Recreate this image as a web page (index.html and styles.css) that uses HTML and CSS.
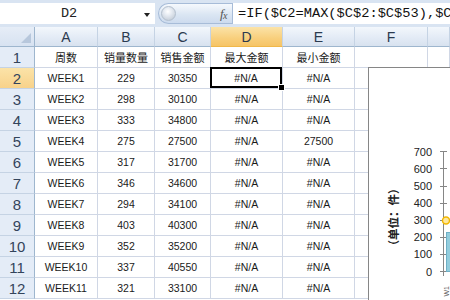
FILE: index.html
```html
<!DOCTYPE html>
<html>
<head>
<meta charset="utf-8">
<link rel="stylesheet" href="styles.css">
</head>
<body>
<div class="fbar">
  <div class="namebox"><span class="nb-text">D2</span><span class="nb-arrow"></span></div>
  <div class="fxpill"><span class="knob"></span><span class="fx">f<span class="fxx">x</span></span></div>
  <div class="formula">=IF($C2=MAX($C$2:$C$53),$C</div>
</div>
<div class="sheet">
  <div class="corner"><span class="tri"></span></div>
  <div class="ch">A</div><div class="ch">B</div><div class="ch">C</div><div class="ch sel">D</div><div class="ch">E</div><div class="ch">F</div><div class="ch"></div>

  <div class="rh">1</div><div class="c cj">周数</div><div class="c cj">销量数量</div><div class="c cj">销售金额</div><div class="c cj">最大金额</div><div class="c cj">最小金额</div><div class="c"></div><div class="c"></div>
  <div class="rh sel">2</div><div class="c">WEEK1</div><div class="c">229</div><div class="c">30350</div><div class="c active">#N/A<span class="handle"></span></div><div class="c">#N/A</div><div class="c"></div><div class="c"></div>
  <div class="rh">3</div><div class="c">WEEK2</div><div class="c">298</div><div class="c">30100</div><div class="c">#N/A</div><div class="c">#N/A</div><div class="c"></div><div class="c"></div>
  <div class="rh">4</div><div class="c">WEEK3</div><div class="c">333</div><div class="c">34800</div><div class="c">#N/A</div><div class="c">#N/A</div><div class="c"></div><div class="c"></div>
  <div class="rh">5</div><div class="c">WEEK4</div><div class="c">275</div><div class="c">27500</div><div class="c">#N/A</div><div class="c">27500</div><div class="c"></div><div class="c"></div>
  <div class="rh">6</div><div class="c">WEEK5</div><div class="c">317</div><div class="c">31700</div><div class="c">#N/A</div><div class="c">#N/A</div><div class="c"></div><div class="c"></div>
  <div class="rh">7</div><div class="c">WEEK6</div><div class="c">346</div><div class="c">34600</div><div class="c">#N/A</div><div class="c">#N/A</div><div class="c"></div><div class="c"></div>
  <div class="rh">8</div><div class="c">WEEK7</div><div class="c">294</div><div class="c">34100</div><div class="c">#N/A</div><div class="c">#N/A</div><div class="c"></div><div class="c"></div>
  <div class="rh">9</div><div class="c">WEEK8</div><div class="c">403</div><div class="c">40300</div><div class="c">#N/A</div><div class="c">#N/A</div><div class="c"></div><div class="c"></div>
  <div class="rh">10</div><div class="c">WEEK9</div><div class="c">352</div><div class="c">35200</div><div class="c">#N/A</div><div class="c">#N/A</div><div class="c"></div><div class="c"></div>
  <div class="rh">11</div><div class="c">WEEK10</div><div class="c">337</div><div class="c">40550</div><div class="c">#N/A</div><div class="c">#N/A</div><div class="c"></div><div class="c"></div>
  <div class="rh">12</div><div class="c">WEEK11</div><div class="c">321</div><div class="c">33100</div><div class="c">#N/A</div><div class="c">#N/A</div><div class="c"></div><div class="c"></div>
</div>
<div class="chart">
  <svg width="82" height="233" viewBox="368 67 82 233" xmlns="http://www.w3.org/2000/svg">
    <g font-family="Liberation Sans, Arial, sans-serif" font-size="11" fill="#222" text-anchor="end">
      <text x="432" y="155.5">700</text>
      <text x="432" y="172.5">600</text>
      <text x="432" y="190">500</text>
      <text x="432" y="206.5">400</text>
      <text x="432" y="224">300</text>
      <text x="432" y="241">200</text>
      <text x="432" y="258">100</text>
      <text x="432" y="275.5">0</text>
    </g>
    <g stroke="#868686" stroke-width="1">
      <line x1="443.5" y1="151" x2="443.5" y2="276"/>
      <line x1="440" y1="151.5" x2="447" y2="151.5"/>
      <line x1="440" y1="168.5" x2="447" y2="168.5"/>
      <line x1="440" y1="186.5" x2="447" y2="186.5"/>
      <line x1="440" y1="203.5" x2="447" y2="203.5"/>
      <line x1="440" y1="220.5" x2="447" y2="220.5"/>
      <line x1="440" y1="237.5" x2="447" y2="237.5"/>
      <line x1="440" y1="254.5" x2="447" y2="254.5"/>
      <line x1="440" y1="271.5" x2="450" y2="271.5"/>
    </g>
    <rect x="446.5" y="232.5" width="10" height="39" fill="#93cddd" stroke="#6fb0c6" stroke-width="1"/>
    <circle cx="446" cy="220.5" r="3.5" fill="#fde7a0" stroke="#f2b700" stroke-width="1.5"/>
    <text x="393" y="217" transform="rotate(-90 393 217)" text-anchor="middle" dominant-baseline="central" font-family="Noto Sans CJK SC, sans-serif" font-size="11.5" font-weight="bold" fill="#222">（单位：件）</text>
    <text x="449" y="286" transform="rotate(-90 449 286)" text-anchor="end" font-family="Liberation Sans, Arial, sans-serif" font-size="7" fill="#555">W1</text>
  </svg>
</div>
</body>
</html>
```

FILE: styles.css
```css
html, body {
  margin: 0;
  padding: 0;
  width: 450px;
  height: 300px;
  overflow: hidden;
  background: #ffffff;
}

.fbar {
  height: 27px;
  box-sizing: border-box;
  padding: 3px 0 3px 0;
  background: #d9e4f2;
  display: flex;
  align-items: stretch;
}

.namebox {
  width: 155px;
  background: #ffffff;
  display: flex;
  align-items: center;
  position: relative;
}

.nb-text {
  width: 138px;
  text-align: center;
  font-family: "Liberation Mono", monospace;
  font-size: 13.5px;
  color: #222;
}

.nb-arrow {
  position: absolute;
  left: 144px;
  top: 10px;
  width: 0;
  height: 0;
  border-left: 3px solid transparent;
  border-right: 3px solid transparent;
  border-top: 4px solid #222;
}

.fxpill {
  margin-left: 3px;
  width: 74px;
  box-sizing: border-box;
  border: 1px solid #a7bcd8;
  border-right: none;
  border-radius: 11px 0 0 11px;
  background: linear-gradient(#f6f9fd, #dbe6f3 55%, #cddbee);
  display: flex;
  align-items: center;
  justify-content: space-between;
  padding: 0 5px 0 2px;
}

.knob {
  width: 15px;
  height: 15px;
  border-radius: 50%;
  background: radial-gradient(circle at 45% 35%, #ffffff 0, #e6ebf2 35%, #b9c3cf 100%);
  border: 1px solid #b3bfcd;
  box-sizing: border-box;
}

.fx {
  font-family: "Liberation Serif", serif;
  font-style: italic;
  font-size: 13px;
  color: #555;
  letter-spacing: -0.5px;
}

.fxx {
  font-size: 10px;
  position: relative;
  top: 1px;
}

.formula {
  flex: 1;
  background: #ffffff;
  border-left: 1px solid #a7bcd8;
  font-family: "Liberation Mono", monospace;
  font-size: 13.7px;
  color: #111;
  padding-left: 5px;
  white-space: nowrap;
  overflow: hidden;
  line-height: 21px;
}

.sheet {
  display: grid;
  grid-template-columns: 35px 63px 57px 56px 72px 72px 73px 1fr;
  grid-template-rows: 20px repeat(12, 21px);
}

.corner {
  background: linear-gradient(#e6edf7, #d7e2f1);
  border-right: 1px solid #9eb6ce;
  border-bottom: 1px solid #9eb6ce;
  position: relative;
}

.tri {
  position: absolute;
  right: 3px;
  bottom: 3px;
  width: 0;
  height: 0;
  border-left: 10px solid transparent;
  border-bottom: 10px solid #b7c7dc;
}

.ch {
  background: linear-gradient(#f3f7fc, #e2eaf5 60%, #d8e2ef);
  border-right: 1px solid #c5d3e4;
  border-bottom: 1px solid #9eb6ce;
  font-family: "Liberation Sans", Arial, sans-serif;
  font-size: 14px;
  color: #2b3a4f;
  display: flex;
  align-items: center;
  justify-content: center;
}

.ch.sel {
  background: linear-gradient(#fbe3a8, #f8cf7c 60%, #f6c466);
  border-bottom-color: #f0b84a;
}

.rh {
  background: #e4ecf7;
  border-right: 1px solid #9eb6ce;
  border-bottom: 1px solid #c5d3e4;
  font-family: "Liberation Sans", Arial, sans-serif;
  font-size: 15px;
  color: #33445c;
  display: flex;
  align-items: center;
  justify-content: center;
}

.rh.sel {
  background: linear-gradient(#fbe3a8, #f8d28a);
}

.c {
  border-right: 1px solid #d0d7e5;
  border-bottom: 1px solid #d0d7e5;
  font-family: "Liberation Sans", Arial, sans-serif;
  font-size: 10.5px;
  color: #1a1a1a;
  display: flex;
  align-items: center;
  justify-content: center;
  white-space: nowrap;
}

.c.cj {
  font-family: "Noto Sans CJK SC", sans-serif;
  font-size: 11px;
}

.c.active {
  position: relative;
  box-shadow: inset 0 0 0 2px #000;
  margin: -1px 0 0 -1px;
}

.handle {
  position: absolute;
  right: -3px;
  bottom: -3px;
  width: 5px;
  height: 5px;
  background: #000;
  border: 1px solid #fff;
}

.chart {
  position: absolute;
  left: 368px;
  top: 67px;
  width: 82px;
  height: 233px;
  box-sizing: border-box;
  background: #ffffff;
  border-left: 1px solid #868686;
  border-top: 1px solid #868686;
  overflow: hidden;
}

.chart svg {
  display: block;
  margin: -1px 0 0 -1px;
}
```
